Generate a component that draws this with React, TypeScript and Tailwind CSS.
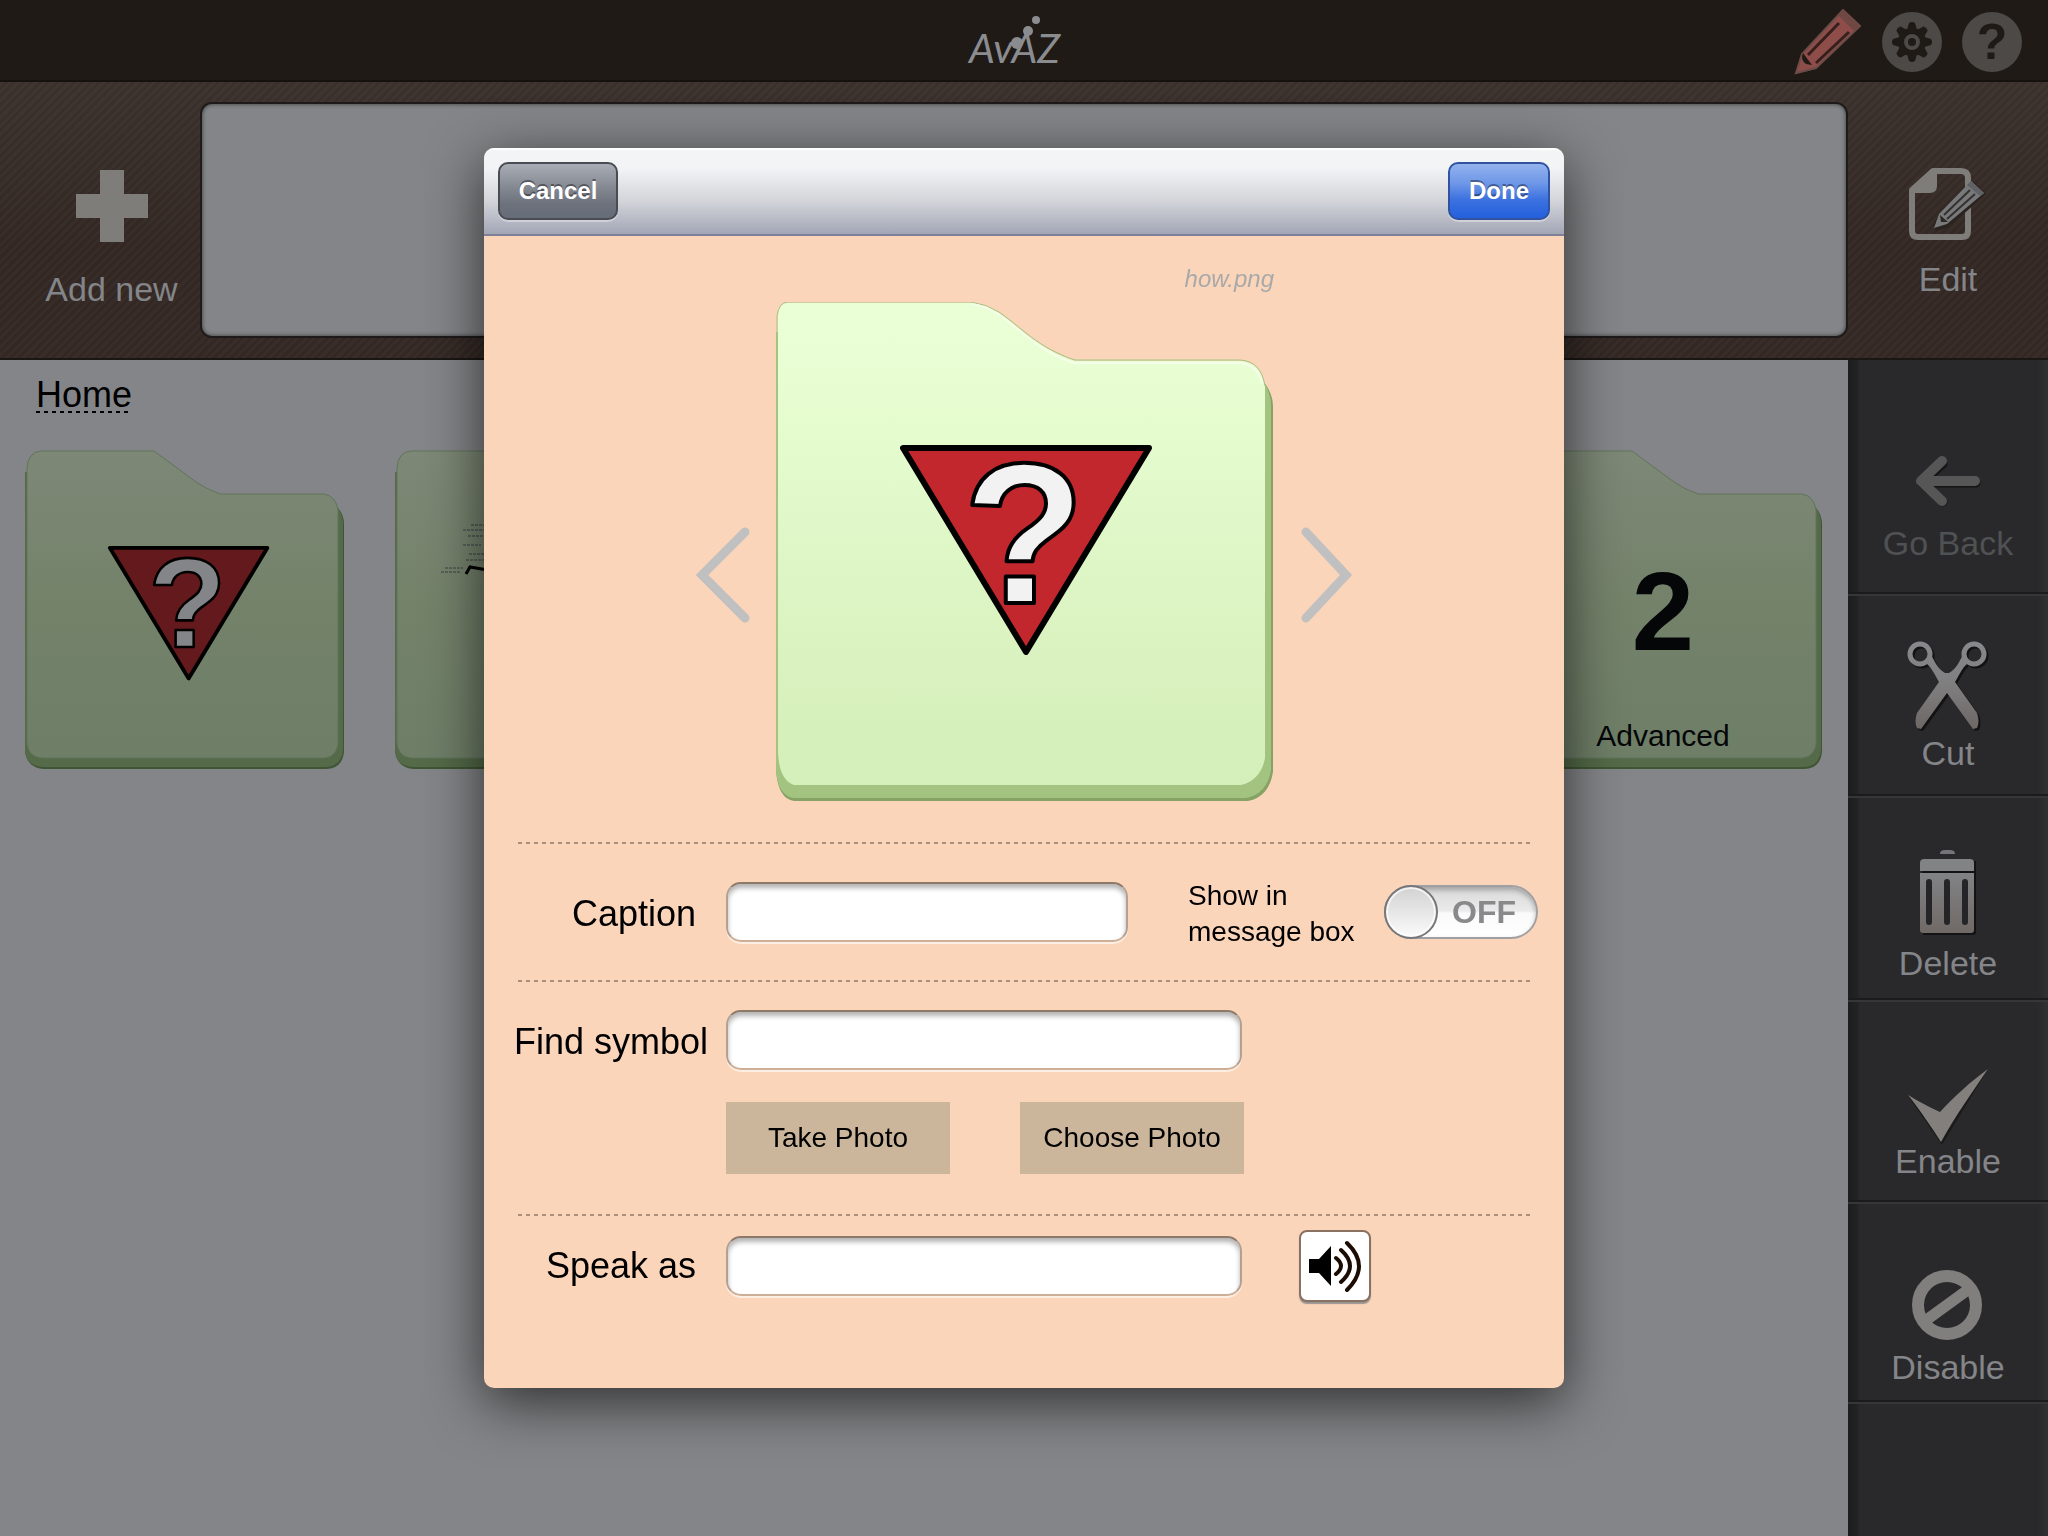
import React, { useState } from 'react';
import { clsx } from 'clsx';

const sideActions = [
  { name: 'Go Back', icon: BackIcon, cell: 'h-[234px] pb-[29px] text-[#505153]', disabled: true },
  { name: 'Cut', icon: CutIcon, cell: 'h-[202px] pb-[21px] text-[#848588]', disabled: false },
  { name: 'Delete', icon: TrashIcon, cell: 'h-[204px] pb-[15px] text-[#848588]', disabled: false },
  { name: 'Enable', icon: CheckIcon, cell: 'h-[202px] pb-[19px] text-[#848588]', disabled: false },
  { name: 'Disable', icon: BanIcon, cell: 'h-[200px] pb-[13px] text-[#848588]', disabled: false },
];

/* ---------- Icons ---------- */

function BackIcon() {
  return (
    <svg width="100" height="100" viewBox="0 0 100 100" fill="none" aria-hidden="true">
      <path d="M45 41 L24 60 L45 79 M26 60 H78" stroke="#151516" strokeWidth="9" strokeLinecap="round" strokeLinejoin="round" />
      <path d="M44 38 L23 58 L44 78 M25 58 H77" stroke="#565656" strokeWidth="10" strokeLinecap="round" strokeLinejoin="round" />
    </svg>
  );
}

function CutIcon() {
  return (
    <svg width="100" height="100" viewBox="0 0 100 100" fill="none" aria-hidden="true">
      <defs>
        <linearGradient id="cut" x1="0" y1="8" x2="0" y2="98" gradientUnits="userSpaceOnUse">
          <stop offset="0" stopColor="#88898c" />
          <stop offset="0.5" stopColor="#7f7e7f" />
          <stop offset="1" stopColor="#6c6664" />
        </linearGradient>
        <g id="scissors">
          <circle cx="22" cy="21" r="10" strokeWidth="5" fill="none" />
          <circle cx="76" cy="21" r="10" strokeWidth="5" fill="none" />
          <path stroke="none" d="M32 18 C35 27 40 36 47 40 H51 C58 36 63 27 66 18 L69 31 C64 35 60 44 57 49 L79 80 C81 86 81 91 79 95 L75 96 L49 60 L23 96 L19 95 C17 91 17 86 19 80 L41 49 C38 44 34 35 29 31 Z" />
        </g>
      </defs>
      <use href="#scissors" x="2" y="2" stroke="#121213" fill="#121213" />
      <use href="#scissors" stroke="url(#cut)" fill="url(#cut)" />
    </svg>
  );
}

function TrashIcon() {
  return (
    <svg width="100" height="100" viewBox="0 0 100 100" fill="none" aria-hidden="true">
      <defs>
        <linearGradient id="bin" x1="0" y1="0" x2="0" y2="1">
          <stop offset="0" stopColor="#828385" />
          <stop offset="1" stopColor="#706966" />
        </linearGradient>
      </defs>
      <path d="M24 18 h54 v71 q0 3 -3 3 h-50 z" fill="#131314" />
      <path d="M42 11 q0 -4 5 -4 h5 q5 0 5 4 z" fill="#737578" />
      <path d="M22 28 v-8 q0 -4 4 -4 h46 q4 0 4 4 v8 z" fill="#828385" />
      <path d="M22 30 h54 v57 q0 3 -3 3 h-48 q-3 0 -3 -3 z" fill="url(#bin)" />
      <path d="M31 39 V79 M49 39 V79 M67 39 V79" stroke="#252527" strokeWidth="6" strokeLinecap="round" />
    </svg>
  );
}

function CheckIcon() {
  return (
    <svg width="100" height="100" viewBox="0 0 100 100" className="overflow-visible" aria-hidden="true">
      <path d="M10 55 L43 72 L90 28 L44 104 Z" fill="#1b1b1c" />
      <path d="M10 54 C20 60 33 67 42 71 C57 55 72 41 90 28 C75 50 58 74 43 101 C34 87 22 69 10 54 Z" fill="#827f7d" />
    </svg>
  );
}

function BanIcon() {
  return (
    <svg width="100" height="100" viewBox="0 0 100 100" fill="none" stroke="#817f7d" strokeWidth="12" aria-hidden="true">
      <circle cx="49" cy="58" r="29" />
      <path d="M27 74 L71 42" strokeWidth="11" />
    </svg>
  );
}

function PencilIcon() {
  return (
    <svg width="68" height="66" viewBox="0 0 68 66" aria-hidden="true">
      <path d="M49 1 L66 17 L22 59 L2 64 L8 45 Z" fill="#8f4d4a" stroke="#6d4c48" strokeWidth="2" />
      <path d="M49 1 L66 17 L60 22 L44 6 Z" fill="#704843" />
      <path d="M14 46 L45 14 M22 54 L55 23" stroke="#35201e" strokeWidth="3" />
      <path d="M9 44 L18 56 L12 55 Q6 51 9 44 Z" fill="#1f1a16" />
    </svg>
  );
}

function GearIcon() {
  return (
    <svg width="60" height="60" viewBox="0 0 60 60" aria-hidden="true">
      <circle cx="30" cy="30" r="30" fill="#4c4946" />
      <g fill="#1f1a16">
        <circle cx="30" cy="30" r="14" />
        {[0, 45, 90, 135, 180, 225, 270, 315].map((angle) => (
          <path key={angle} d="M25 18 L27 11 Q30 9 33 11 L35 18 Z" transform={`rotate(${angle} 30 30)`} />
        ))}
      </g>
      <circle cx="30" cy="30" r="6" fill="#1f1a16" stroke="#4c4946" strokeWidth="4" />
    </svg>
  );
}

function EditIcon() {
  return (
    <svg width="78" height="74" viewBox="0 0 78 74" fill="none" aria-hidden="true">
      <path d="M24 3 H52 Q59 3 59 10 V63 Q59 69 53 69 H9 Q3 69 3 63 V22 Z" stroke="#7f7d7a" strokeWidth="6" strokeLinejoin="round" />
      <path d="M22 2 H28 V18 Q28 25 21 25 H2 V20 Z" fill="#7f7d7a" />
      <path d="M64 13 L77 26 L40 59 L27 63 L24 57 L31 45 Z" fill="#2a2320" />
      <path d="M62 13 L75 25 L38 56 L25 60 L30 46 Z" fill="#77797a" />
      <path d="M35 47 L61 22 M38 51 L66 26" stroke="#35302e" strokeWidth="2" />
      <path d="M62 13 L75 25 L71 28 L58 17 Z" fill="#606265" />
      <path d="M31 47 L39 54 L32 54 Z" fill="#302724" />
    </svg>
  );
}

function SpeakerIcon() {
  return (
    <svg width="52" height="52" viewBox="0 0 52 52" fill="none" stroke="#1c0d04" strokeLinecap="round" aria-hidden="true">
      <path d="M0 19 H10 L22 6 V46 L10 33 H0 Z" fill="#000" stroke="none" />
      <path d="M27 18 Q37 26 27 34" strokeWidth="4" />
      <path d="M32 10 Q50 26 32 42" strokeWidth="4" />
      <path d="M38 3 Q62 26 38 50" strokeWidth="4" />
    </svg>
  );
}

function Logo() {
  return (
    <svg width="120" height="60" viewBox="0 0 120 60" fill="#8b8c90" role="img" aria-label="Avaz">
      <circle cx="53" cy="31" r="6" />
      <circle cx="64" cy="19" r="5" />
      <circle cx="72" cy="8" r="4" />
      <text x="5" y="51" fontSize="41" fontStyle="italic" fontFamily="Lato, sans-serif">
        AvAZ
      </text>
    </svg>
  );
}

/* ---------- Folders ---------- */

// "how" symbol, drawn in a 250 x 210 box
function HowSymbol({ dim }: { dim?: boolean }) {
  return (
    <g stroke="#000" strokeLinejoin="round">
      <path d="M3 3 H249 L126 207 Z" fill={dim ? '#64191d' : '#c1272d'} strokeWidth="6" />
      <text
        x="124"
        y="158"
        textAnchor="middle"
        fontSize="200"
        fontWeight="700"
        fontFamily="'Liberation Sans', Arial, sans-serif"
        fill={dim ? '#848588' : '#f2f2f2'}
        strokeWidth="4"
      >
        ?
      </text>
    </g>
  );
}

function FolderTile({ label, children }: { label: string; children?: React.ReactNode }) {
  return (
    <button aria-label={label} className="w-[320px]">
      <svg viewBox="0 0 320 320" className="block w-full">
        <defs>
          <linearGradient id="tile" x1="0" y1="0" x2="0" y2="1">
            <stop offset="0" stopColor="#7d8876" />
            <stop offset="0.5" stopColor="#74826a" />
            <stop offset="1" stopColor="#6e7e67" />
          </linearGradient>
        </defs>
        <path d="M0 22 H40 V70 H312 V57 Q319 64 319 74 V302 Q317 319 301 319 H18 Q1 317 0 300 Z" fill="#3f5535" />
        <path d="M0 22 H40 V70 H312 V57 Q318 64 318 74 V300 Q316 317 300 317 H18 Q1 316 0 300 Z" fill="#546a48" />
        <path
          d="M16 1 H129 L171 32 Q181 39 195 44 H299 Q311 46 313 60 V294 Q311 307 299 308 H17 Q3 307 2 292 V18 Q3 2 16 1 Z"
          fill="url(#tile)"
          stroke="#60745a"
          strokeWidth="1"
        />
        {children}
      </svg>
    </button>
  );
}

function FolderPreview() {
  return (
    <svg viewBox="0 0 498 500" className="block w-full" role="img" aria-label="how">
      <defs>
        <linearGradient id="preview" x1="0" y1="0" x2="0" y2="1">
          <stop offset="0" stopColor="#ebffd7" />
          <stop offset="0.25" stopColor="#e5fccf" />
          <stop offset="0.75" stopColor="#d9f2bf" />
          <stop offset="1" stopColor="#d4efba" />
        </linearGradient>
      </defs>
      <path d="M0 30 H40 V100 H488 V80 Q497 92 497 104 V470 Q493 495 472 499 H18 Q2 497 0 468 Z" fill="#86a365" />
      <path d="M0 30 H40 V100 H488 V80 Q495 92 495 104 V468 Q491 492 470 496 H18 Q2 494 0 468 Z" fill="#a3c480" />
      <path
        d="M12 1 H195 Q210 3 223 11 C245 26 262 47 299 59 H464 Q485 60 489 84 V456 Q485 478 465 483 H18 Q3 478 2 450 V14 Q3 1 12 1 Z"
        fill="url(#preview)"
      />
      <path d="M1 450 V14 Q3 0 12 0 H195 Q210 2 223 10 C245 25 262 46 299 58 H464 Q485 59 489 84" fill="none" stroke="#a3c480" strokeWidth="1" />
      <path d="M196 2 Q210 4 222 12 C244 27 261 49 298 61 H463 Q482 62 486 82" fill="none" stroke="#f3ffe8" strokeWidth="2" />
      <g transform="translate(124 143)">
        <HowSymbol />
      </g>
    </svg>
  );
}

/* ---------- Form pieces ---------- */

function Divider() {
  return (
    <div className="mx-[34px] h-[2px] bg-[repeating-linear-gradient(90deg,#a98f7c_0_4px,transparent_4px_8px)]" />
  );
}

function TextField({ id, className }: { id: string; className: string }) {
  return (
    <input
      id={id}
      type="text"
      className={clsx(
        'ml-[18px] h-[60px] rounded-[15px] border-2 border-x-[#b3a093] border-t-[#8e7868] border-b-[#cdae96] bg-white px-4 text-[28px] shadow-[inset_0_4px_5px_rgba(0,0,0,0.3),0_2px_0_rgba(255,255,255,0.6)] outline-none',
        className
      )}
    />
  );
}

function BarButton({ children, className }: { children: React.ReactNode; className: string }) {
  return (
    <button
      className={clsx(
        'h-[58px] rounded-[10px] border-2 text-[24px] leading-[28px] font-bold text-white shadow-[0_2px_0_rgba(255,255,255,0.35)] [text-shadow:0_-2px_0_rgba(0,0,0,0.4)]',
        className
      )}
    >
      {children}
    </button>
  );
}

function EditDialog() {
  const [showInBox, setShowInBox] = useState(false);

  return (
    <div
      role="dialog"
      aria-label="Edit folder"
      className="w-full max-w-[1080px] overflow-hidden rounded-[10px] bg-[#fbd5ba] text-black shadow-[0_14px_56px_rgba(0,0,0,0.65)]"
    >
      <div className="flex h-[88px] items-start justify-between border-t-2 border-b-2 border-t-white border-b-[#7c8197] bg-[linear-gradient(#f4f5f7_0%,#f2f3f5_22%,#d3d5da_60%,#a3a6b6_100%)] px-[14px] pt-3">
        <BarButton className="w-[120px] border-[#494c52] bg-[linear-gradient(#a9adb6_0%,#83878f_45%,#6c717c_75%,#666c78_100%)]">Cancel</BarButton>
        <BarButton className="w-[102px] border-[#31529f] bg-[linear-gradient(#93b2ee_0%,#6f98e8_35%,#3d72df_65%,#2460dd_100%)]">Done</BarButton>
      </div>

      <div className="flex items-end justify-center gap-[26px] pt-[29px] pl-[2px]">
        <button aria-label="Previous symbol" className="mb-[179px]">
          <svg width="54" height="96" viewBox="0 0 54 96" fill="none" stroke="#c0c0c0" strokeWidth="9" strokeLinecap="round">
            <path d="M49 5 L6 48 L49 91" />
          </svg>
        </button>
        <div className="w-[498px]">
          <p className="mb-[9px] text-right text-[24px] leading-[28px] text-[#a9a9a9] italic">how.png</p>
          <FolderPreview />
        </div>
        <button aria-label="Next symbol" className="mb-[179px]">
          <svg width="54" height="96" viewBox="0 0 54 96" fill="none" stroke="#c0c0c0" strokeWidth="9" strokeLinecap="round">
            <path d="M6 5 L46 48 L6 91" />
          </svg>
        </button>
      </div>

      <div className="pt-10">
        <Divider />
        <div className="flex h-[136px] items-center text-[36px] leading-[40px]">
          <label htmlFor="caption" className="w-[224px] pt-1 pr-3 text-right">Caption</label>
          <TextField id="caption" className="w-[402px]" />
          <label htmlFor="show-in-box" className="ml-[60px] pt-1 text-[28px] leading-[36px]">
            Show in
            <br />
            message box
          </label>
          <label className="relative mr-[26px] ml-auto flex h-[54px] w-[154px] items-center justify-end rounded-full border-2 border-[#a0a0a2] bg-[linear-gradient(#d8d8d9_0%,#ebebec_48%,#fafafa_52%,#ffffff_100%)] pr-[20px] shadow-[inset_0_3px_5px_rgba(0,0,0,0.25)]">
            <input
              id="show-in-box"
              type="checkbox"
              role="switch"
              checked={showInBox}
              onChange={(e) => setShowInBox(e.target.checked)}
              className="sr-only"
            />
            <span className="absolute -top-[2px] -left-[2px] size-[54px] rounded-full border-2 border-[#77777a] bg-[linear-gradient(#d2d2d3,#fbfbfb)] shadow-[inset_0_0_0_2px_rgba(255,255,255,0.7)]" />
            <span className="text-[32px] leading-[40px] font-bold text-[#89898b]">{showInBox ? 'ON' : 'OFF'}</span>
          </label>
        </div>

        <Divider />
        <div className="flex items-center pt-7 text-[36px] leading-[40px]">
          <label htmlFor="symbol" className="w-[224px] pt-1 text-right">Find symbol</label>
          <TextField id="symbol" className="w-[516px]" />
        </div>
        <div className="flex gap-[70px] pt-8 pb-10 pl-[242px] text-[28px] leading-[36px]">
          <button className="h-[72px] w-[224px] bg-[#cbb69b]">Take Photo</button>
          <button className="h-[72px] w-[224px] bg-[#cbb69b]">Choose Photo</button>
        </div>

        <Divider />
        <div className="flex items-center pt-[14px] pb-[86px] text-[36px] leading-[40px]">
          <label htmlFor="speak" className="w-[224px] pr-3 text-right">Speak as</label>
          <TextField id="speak" className="w-[516px]" />
          <button
            aria-label="Play"
            className="ml-[57px] flex size-[72px] items-center justify-center rounded-[8px] border-2 border-[#8a7263] bg-white shadow-[0_2px_1px_rgba(110,120,130,0.7)]"
          >
            <SpeakerIcon />
          </button>
        </div>
      </div>
    </div>
  );
}

export default function App() {
  return (
    <div className="flex min-h-screen flex-col bg-[#848588] font-['Liberation_Sans',Arial,sans-serif]">
      <header className="flex h-[82px] items-center border-b-2 border-[#15110f] bg-[#1f1a16] px-[26px] pt-1">
        <div className="flex-1" />
        <Logo />
        <div className="flex flex-1 items-center justify-end gap-5">
          <button aria-label="Edit mode">
            <PencilIcon />
          </button>
          <button aria-label="Settings">
            <GearIcon />
          </button>
          <button aria-label="Help" className="size-[60px] rounded-full bg-[#4c4946] text-[50px] leading-[60px] font-bold text-[#1f1a16]">
            ?
          </button>
        </div>
      </header>

      {/* Message bar */}
      <div className="flex h-[278px] border-b-2 border-[#1a1614] bg-[repeating-linear-gradient(135deg,rgba(255,255,255,0.025)_0_3px,transparent_3px_6px),linear-gradient(#3b312c,#322723_60%,#332824)] text-[34px] leading-[40px] text-[#848588]">
        <button className="flex w-[200px] flex-col items-center pt-[88px] pl-[23px]">
          <svg width="72" height="72" viewBox="0 0 72 72" fill="#7f7d7a" aria-hidden="true">
            <path d="M24 0 H48 V24 H72 V48 H48 V72 H24 V48 H0 V24 H24 Z" />
          </svg>
          <span className="mt-[27px]">Add new</span>
        </button>
        <div className="mt-5 mb-5 flex-1 rounded-[12px] border-2 border-[#1d1a19] bg-[#848588] shadow-[inset_0_0_4px_rgba(0,0,0,0.6)]" />
        <button className="flex w-[200px] flex-col items-center pt-[86px]">
          <EditIcon />
          <span className="mt-[17px]">Edit</span>
        </button>
      </div>

      <div className="flex flex-1">
        <main className="flex-1 px-[25px] pt-[15px]">
          <a href="#home" className="ml-[11px] block w-fit bg-[repeating-linear-gradient(90deg,#000_0_4px,transparent_4px_8px)] bg-[length:100%_2px] bg-[position:0_36px] bg-no-repeat text-[36px] leading-[40px] text-black">
            Home
          </a>
          <div className="mt-[35px] flex justify-between">
            <FolderTile label="how">
              <g transform="translate(83 96) scale(0.64)">
                <HowSymbol dim />
              </g>
            </FolderTile>
            <FolderTile label="actions">
              <path
                d="M76 75 H98 M68 80 H98 M73 86 H98 M68 95 H86 M74 104 H98 M71 110 H92 M50 118 H68 M46 122 H66"
                stroke="#3c4047"
                strokeWidth="1"
                strokeDasharray="3 1"
              />
              <path d="M71 124 L75 117 L110 123" fill="none" stroke="#000" strokeWidth="3" />
            </FolderTile>
            <FolderTile label="folder 3" />
            <FolderTile label="folder 4" />
            <FolderTile label="Advanced">
              <g textAnchor="middle" fontFamily="'Liberation Sans', Arial, sans-serif" fill="#050608">
                <text x="160" y="200" fontSize="112" fontWeight="700">2</text>
                <text x="160" y="296" fontSize="30">Advanced</text>
              </g>
            </FolderTile>
          </div>
        </main>

        <aside className="w-[200px] bg-[linear-gradient(90deg,#1b1d1f_0,#222325_10px,#29292b_11px,#29292b_190px,#313134_200px)] text-[34px] leading-[40px]">
          {sideActions.map((action) => (
            <button
              key={action.name}
              disabled={action.disabled}
              className={clsx(
                'flex w-full flex-col items-center justify-end border-b-2 border-[#1b1b1d] shadow-[0_2px_0_#363638]',
                action.cell
              )}
            >
              <action.icon />
              <span>{action.name}</span>
            </button>
          ))}
        </aside>
      </div>

      <div className="fixed inset-0 flex items-center justify-center">
        <EditDialog />
      </div>
    </div>
  );
}
